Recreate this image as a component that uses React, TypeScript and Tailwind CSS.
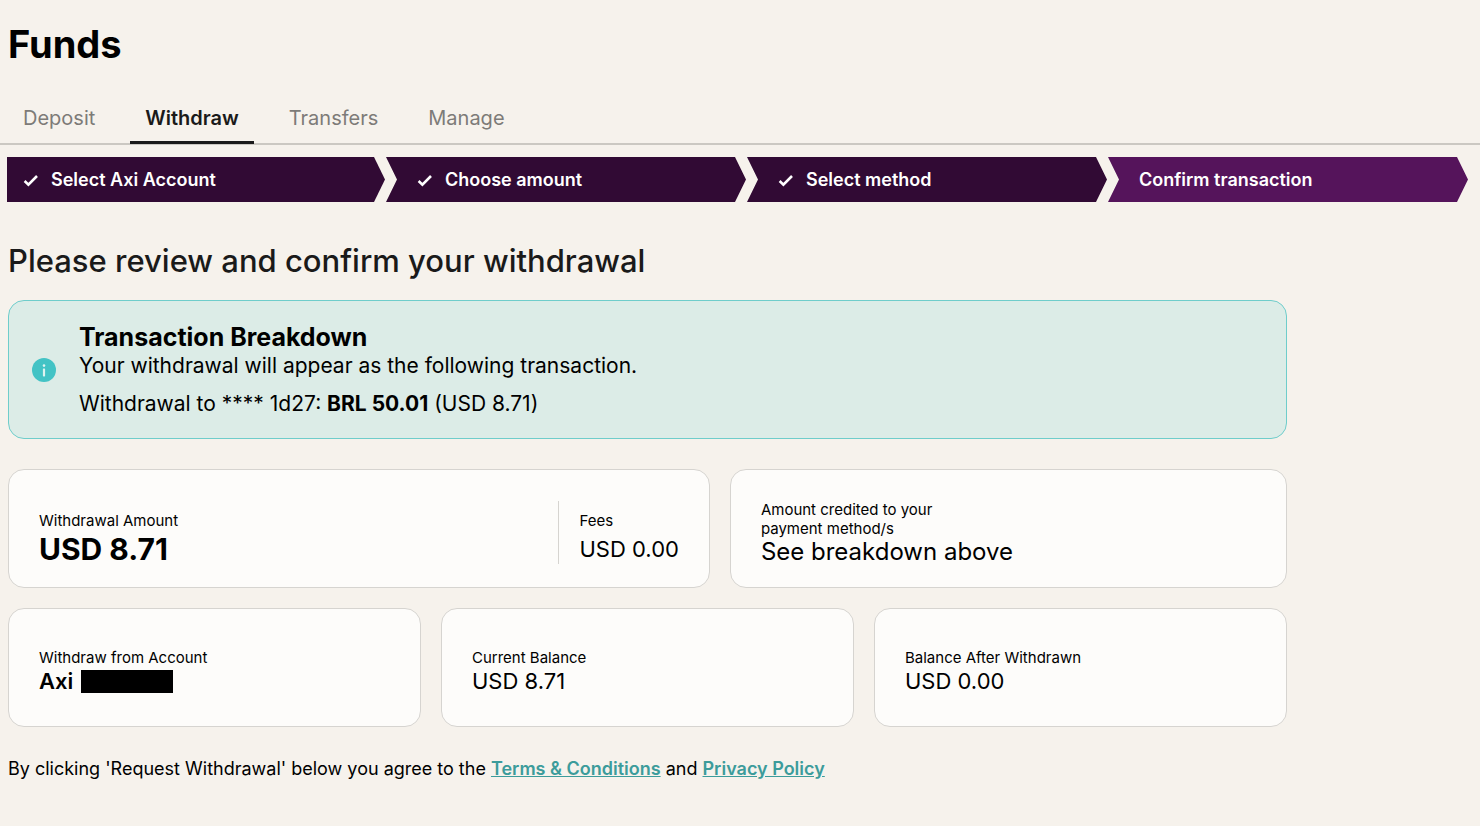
import type { ReactNode } from "react";

const tabs = ["Deposit", "Withdraw", "Transfers", "Manage"];
const activeTab = "Withdraw";

const steps = [
  { label: "Select Axi Account", done: true },
  { label: "Choose amount", done: true },
  { label: "Select method", done: true },
  { label: "Confirm transaction", done: false },
];

function CheckIcon() {
  return (
    <svg viewBox="0 0 16 14" className="h-3.5 w-4 shrink-0" fill="none" aria-hidden="true">
      <path d="M1.6 8 L5.4 11.6 L14 3" stroke="currentColor" strokeWidth="2.6" />
    </svg>
  );
}

function InfoIcon() {
  return (
    <svg viewBox="0 0 24 24" className="size-6 shrink-0" aria-hidden="true">
      <circle cx="12" cy="12" r="12" fill="#43c3c5" />
      <circle cx="12" cy="7.6" r="1.3" fill="#dff3f0" />
      <rect x="10.9" y="10.4" width="2.2" height="8" rx="0.6" fill="#dff3f0" />
    </svg>
  );
}

function Tabs() {
  return (
    <nav aria-label="Funds sections" className="flex gap-5 border-b-2 border-[#cbc8c2] pl-2">
      {tabs.map((tab) => (
        <button
          key={tab}
          type="button"
          aria-current={tab === activeTab ? "page" : undefined}
          className={
            tab === activeTab
              ? "-mb-px border-b-3 border-[#1a1a1a] px-[15px] pb-[9px] text-xl leading-7 font-semibold text-[#1a1a1a]"
              : "-mb-px border-b-3 border-transparent px-[15px] pb-[9px] text-xl leading-7 text-[#7d7b78]"
          }
        >
          {tab}
        </button>
      ))}
    </nav>
  );
}

function Steps() {
  return (
    <ol className="grid grid-cols-[21fr_20fr_20fr_20fr] gap-px pr-3 pl-[7px]">
      {steps.map((step, index) => (
        <li
          key={step.label}
          aria-current={step.done ? undefined : "step"}
          className={[
            "flex h-[45px] items-center gap-3 text-lg font-semibold text-white",
            index === 0
              ? "pl-4 [clip-path:polygon(0_0,calc(100%-11px)_0,100%_50%,calc(100%-11px)_100%,0_100%)]"
              : "pl-[31px] [clip-path:polygon(0_0,calc(100%-11px)_0,100%_50%,calc(100%-11px)_100%,0_100%,11px_50%)]",
            step.done ? "bg-[#310a34]" : "bg-[#55145b]",
          ].join(" ")}
        >
          {step.done && <CheckIcon />}
          {step.label}
        </li>
      ))}
    </ol>
  );
}

function Card({ children }: { children: ReactNode }) {
  return (
    <div className="flex min-h-[119px] items-center rounded-2xl border border-[#d6d4d0] bg-[#fdfcfa] px-[30px] pt-2">
      {children}
    </div>
  );
}

export default function App() {
  return (
    <main className="min-h-screen bg-[#f6f2ec] pt-5 pb-6 font-['Inter',sans-serif] text-black">
      <h1 className="px-2 text-[38px] leading-[48px] font-bold">Funds</h1>
      <div className="pt-9">
        <Tabs />
      </div>
      <div className="pt-3">
        <Steps />
      </div>

      <section className="max-w-[1295px] px-2 pt-9">
        <h2 className="text-[31px] leading-[46px] font-medium text-[#1a1a1a]">
          Please review and confirm your withdrawal
        </h2>

        <div className="mt-4 flex min-h-[139px] items-center gap-[23px] rounded-2xl border border-[#6fcdcb] bg-[#dcece7] px-[23px]">
          <InfoIcon />
          <div className="text-[21px] leading-7">
            <h3 className="text-[25px] leading-[30px] font-bold">Transaction Breakdown</h3>
            <p>Your withdrawal will appear as the following transaction.</p>
            <p className="mt-2.5">
              Withdrawal to **** 1d27: <strong className="font-bold">BRL 50.01</strong> (USD 8.71)
            </p>
          </div>
        </div>

        <dl className="mt-[30px] grid grid-cols-[63fr_50fr] gap-5">
          <Card>
            <div className="grow pt-2.5">
              <dt className="text-[15px] leading-[19px]">Withdrawal Amount</dt>
              <dd className="mt-1 text-3xl leading-[30px] font-bold">USD 8.71</dd>
            </div>
            <div className="border-l border-[#d6d4d0] pt-2.5 pl-5">
              <dt className="text-[15px] leading-[19px]">Fees</dt>
              <dd className="mt-1 text-[22px] leading-[30px]">USD 0.00</dd>
            </div>
          </Card>
          <Card>
            <div>
              <dt className="max-w-[200px] text-[15px] leading-[19px]">
                Amount credited to your payment method/s
              </dt>
              <dd className="text-2xl leading-7">See breakdown above</dd>
            </div>
          </Card>
        </dl>

        <dl className="mt-5 grid grid-cols-3 gap-5">
          <Card>
            <div>
              <dt className="text-[15px] leading-[19px]">Withdraw from Account</dt>
              <dd className="flex items-center gap-2 text-[22px] leading-7 font-semibold">
                Axi
                <span className="h-[23px] w-[92px] bg-black" />
              </dd>
            </div>
          </Card>
          <Card>
            <div>
              <dt className="text-[15px] leading-[19px]">Current Balance</dt>
              <dd className="text-[22px] leading-7">USD 8.71</dd>
            </div>
          </Card>
          <Card>
            <div>
              <dt className="text-[15px] leading-[19px]">Balance After Withdrawn</dt>
              <dd className="text-[22px] leading-7">USD 0.00</dd>
            </div>
          </Card>
        </dl>

        <p className="mt-7 text-lg leading-7">
          By clicking 'Request Withdrawal' below you agree to the{" "}
          <a href="#terms" className="font-semibold text-[#3c9c9b] underline">
            Terms &amp; Conditions
          </a>{" "}
          and{" "}
          <a href="#privacy" className="font-semibold text-[#3c9c9b] underline">
            Privacy Policy
          </a>
        </p>
      </section>
    </main>
  );
}
